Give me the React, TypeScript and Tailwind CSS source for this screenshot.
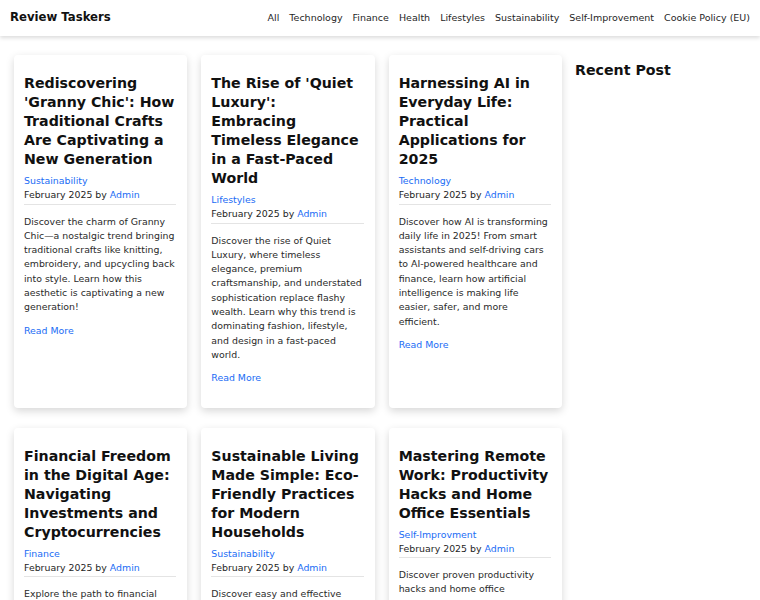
import React from "react";

type Post = { title: string; cat: string; desc: string };

const posts: Post[] = [
  {
    title: "Rediscovering 'Granny Chic': How Traditional Crafts Are Captivating a New Generation",
    cat: "Sustainability",
    desc: "Discover the charm of Granny Chic\u2014a nostalgic trend bringing traditional crafts like knitting, embroidery, and upcycling back into style. Learn how this aesthetic is captivating a new generation!",
  },
  {
    title: "The Rise of 'Quiet Luxury': Embracing Timeless Elegance in a Fast-Paced World",
    cat: "Lifestyles",
    desc: "Discover the rise of Quiet Luxury, where timeless elegance, premium craftsmanship, and understated sophistication replace flashy wealth. Learn why this trend is dominating fashion, lifestyle, and design in a fast-paced world.",
  },
  {
    title: "Harnessing AI in Everyday Life: Practical Applications for 2025",
    cat: "Technology",
    desc: "Discover how AI is transforming daily life in 2025! From smart assistants and self-driving cars to AI-powered healthcare and finance, learn how artificial intelligence is making life easier, safer, and more efficient.",
  },
  {
    title: "Financial Freedom in the Digital Age: Navigating Investments and Cryptocurrencies",
    cat: "Finance",
    desc: "Explore the path to financial independence in the digital age. Learn how to build wealth with smart investments, budgeting apps, and the basics of cryptocurrencies.",
  },
  {
    title: "Sustainable Living Made Simple: Eco-Friendly Practices for Modern Households",
    cat: "Sustainability",
    desc: "Discover easy and effective ways to reduce waste, save energy, and make your home greener with simple eco-friendly habits for everyday life.",
  },
  {
    title: "Mastering Remote Work: Productivity Hacks and Home Office Essentials",
    cat: "Self-Improvment",
    desc: "Discover proven productivity hacks and home office essentials that help you stay focused, balanced, and efficient while working remotely.",
  },
];

const nav = ["All", "Technology", "Finance", "Health", "Lifestyles", "Sustainability", "Self-Improvement", "Cookie Policy (EU)"];

function Card({ p }: { p: Post }) {
  return (
    <div className="bg-white rounded-[4px] shadow-[0_3px_8px_rgba(0,0,0,0.16)] pl-[10px] pr-[11px] pt-[19px] pb-[22px] flex flex-col">
      <h3 className="text-[14.2px] leading-[19px] font-bold text-[#111]">{p.title}</h3>
      <a className="mt-[5px] text-[9.4px] leading-[14.3px] text-[#1a6cf5]">{p.cat}</a>
      <div className="text-[9.4px] leading-[14.3px] text-[#1e1e1e] border-b border-[#e4e4e4] pb-[1px]">
        February 2025 by <span className="text-[#1a6cf5]">Admin</span>
      </div>
      <p className="mt-[10px] text-[9.4px] leading-[14.3px] text-[#2a2a2a]">{p.desc}</p>
      <a className="mt-[9px] text-[9.4px] leading-[14.3px] text-[#1a6cf5]">Read More</a>
    </div>
  );
}

export default function App() {
  return (
    <div className="min-h-[600px] bg-white" style={{ fontFamily: '"DejaVu Sans", sans-serif' }}>
      <header className="h-[36px] bg-white shadow-[0_2px_4px_rgba(0,0,0,0.14)] flex items-center justify-between pl-[10px] pr-[10px] relative z-10">
        <div className="text-[11.7px] font-bold text-[#111]">Review Taskers</div>
        <nav className="flex items-center gap-[10px] text-[9.5px] text-[#1f1f1f]">
          {nav.map((n) => (
            <a key={n}>{n}</a>
          ))}
        </nav>
      </header>
      <main className="flex gap-[13px] px-[14px] pt-[19px]">
        <div className="flex-1 grid grid-cols-3 gap-x-[14px] gap-y-[20px]">
          {posts.map((p) => (
            <Card key={p.title} p={p} />
          ))}
        </div>
        <aside className="w-[171px] pt-[6px]">
          <h2 className="text-[14.2px] leading-[19px] font-bold text-[#111]">Recent Post</h2>
        </aside>
      </main>
    </div>
  );
}
